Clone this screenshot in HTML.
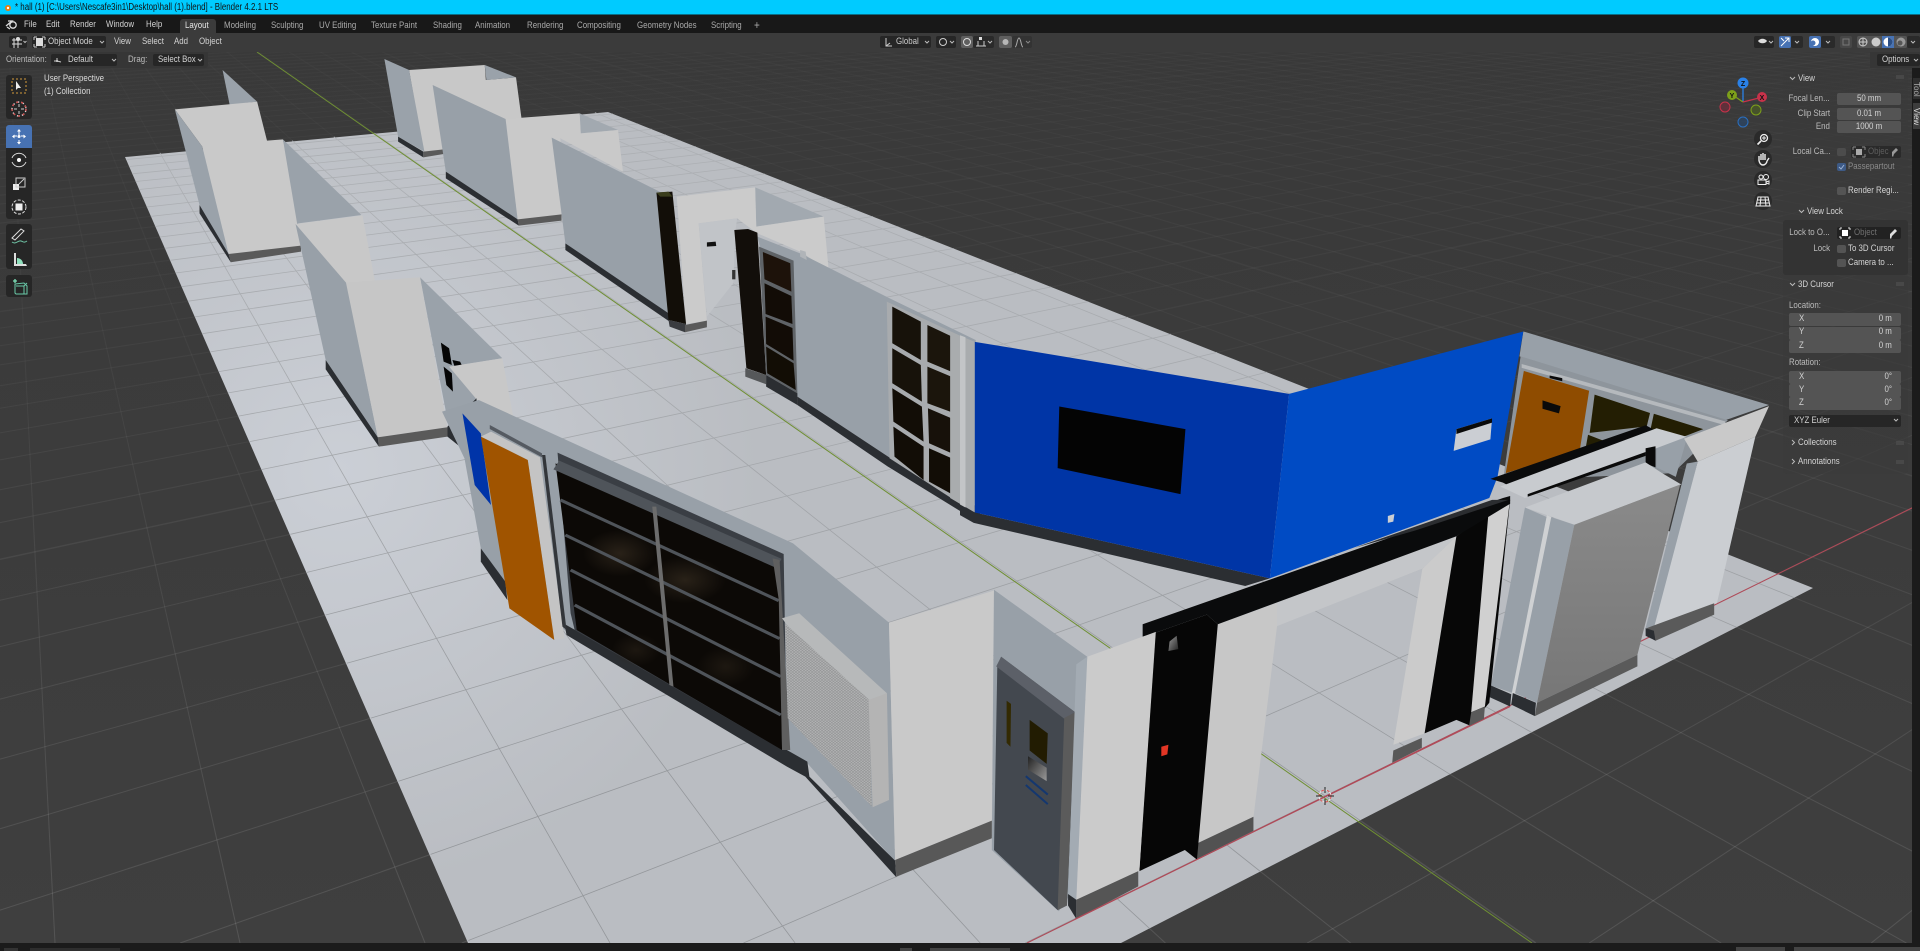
<!DOCTYPE html>
<html><head><meta charset="utf-8"><title>Blender</title>
<style>
html,body{margin:0;padding:0;background:#1d1d1d;overflow:hidden;width:1920px;height:951px}
#app{position:relative;width:1920px;height:951px;overflow:hidden;background:#3b3b3b;font-family:"Liberation Sans",sans-serif}
.b{position:absolute}
.t{position:absolute;white-space:nowrap;font:9.5px/10px "Liberation Sans",sans-serif;color:#d4d4d4;transform:scaleX(.83);transform-origin:0 50%}
.r{transform-origin:100% 50%}
.c{transform-origin:50% 50%;text-align:center}
.d{color:#aaa}
.f{position:absolute;background:#545454;border-radius:2px}
.k{position:absolute;background:#545454;border-radius:2px;width:9px;height:8px}
svg{position:absolute;left:0;top:0}
</style></head><body><div id="app">

<svg id="scene" width="1920" height="951" viewBox="0 0 1920 951" xmlns="http://www.w3.org/2000/svg">
<defs>
<linearGradient id="bgv" x1="0" y1="0" x2="0" y2="1"><stop offset="0" stop-color="#393939"/><stop offset="1" stop-color="#3f3f3f"/></linearGradient>
<linearGradient id="gl" gradientUnits="userSpaceOnUse" x1="0" y1="40" x2="0" y2="900"><stop offset="0" stop-color="#fff" stop-opacity=".02"/><stop offset=".35" stop-color="#fff" stop-opacity=".035"/><stop offset="1" stop-color="#fff" stop-opacity=".11"/></linearGradient>
<linearGradient id="ft" gradientUnits="userSpaceOnUse" x1="0" y1="110" x2="0" y2="800"><stop offset="0" stop-color="#aeb1b5"/><stop offset=".5" stop-color="#a4a7ab"/><stop offset="1" stop-color="#94979b"/></linearGradient>
<radialGradient id="fl" gradientUnits="userSpaceOnUse" cx="340" cy="470" r="420"><stop offset="0" stop-color="#cbcfd6"/><stop offset="1" stop-color="#babdc2"/></radialGradient>
<radialGradient id="spot"><stop offset="0" stop-color="#2c241a" stop-opacity=".9"/><stop offset="1" stop-color="#2c241a" stop-opacity="0"/></radialGradient>
<linearGradient id="gf" x1="0" y1="0" x2="0" y2="1"><stop offset="0" stop-color="#8a8a8a"/><stop offset="1" stop-color="#777"/></linearGradient>
<linearGradient id="sq" x1="0" y1="0" x2="1" y2="1"><stop offset="0" stop-color="#222"/><stop offset="1" stop-color="#9a9a9a"/></linearGradient>
<pattern id="vent" patternUnits="userSpaceOnUse" width="8" height="8"><rect width="8" height="8" fill="#b4b5b6"/><path d="M0 0L8 8M0 8L8 0" stroke="#8b8c8d" stroke-width="1.3"/></pattern>
<clipPath id="vp"><rect x="0" y="33" width="1920" height="910"/></clipPath>
</defs>
<rect x="0" y="33" width="1920" height="910" fill="url(#bgv)"/>
<g clip-path="url(#vp)">
<g id="bggrid" fill="none" stroke="url(#gl)" stroke-width="1"></g>
<polygon points="125,157 608,112 1813,588 1121,943 468,943" fill="url(#fl)"/>
<g id="flgrid" fill="none" stroke="url(#ft)" stroke-width=".8"></g>
<line x1="257" y1="52" x2="1532" y2="943" stroke="#6f8f33" stroke-width="1"/>
<line x1="1027" y1="943" x2="1920" y2="504" stroke="#b04a58" stroke-width="1.1"/>

<!-- back blocks : zoom 8 space -->
<g transform="translate(120 50) scale(.5485 .3333)">
<!-- block A -->
<polygon points="187,60 250,155 200,165" fill="#9aa2aa"/>
<polygon points="297,268 440,495 325,520 325,590" fill="#9aa2aa"/>
<polygon points="100,178 250,155 268,272 297,268 330,590 198,612 150,290" fill="#c9c9c9"/>
<polygon points="100,178 150,290 198,612 145,465" fill="#9aa2aa"/>
<polygon points="198,612 330,587 330,605 202,637" fill="#5a5a5a"/>
<polygon points="145,465 198,612 202,637 145,490" fill="#2b2e32"/>
<!-- block B -->
<polygon points="320,522 442,496 465,695 413,705" fill="#c8c8c8"/>
<polygon points="547,682 697,925 603,950 650,1045 600,1135" fill="#9aa2aa"/>
<polygon points="320,522 413,700 470,1162 375,930" fill="#98a0a8"/>
<polygon points="412,698 547,682 597,1132 470,1162" fill="#c6c6c6"/>
<polygon points="470,1162 597,1132 597,1160 472,1190" fill="#5a5a5a"/>
<polygon points="375,930 470,1162 472,1190 375,958" fill="#2b2e32"/>
<polygon points="585,878 600,895 605,945 590,935" fill="#050505"/>
<polygon points="590,950 605,970 607,1025 595,1005" fill="#050505"/>
<polygon points="606,930 620,935 624,948 610,950" fill="#050505"/>
<polygon points="600,950 697,925 717,1100 650,1048" fill="#c8c8c8"/>
<polygon points="597,1130 650,1045 650,1230 597,1160" fill="#2b2e32"/>
<!-- block D -->
<polygon points="527,60 665,45 667,90 722,82 732,205 760,500 587,305 553,305" fill="#c8c8c8"/>
<polygon points="665,45 722,82 668,90" fill="#9aa2aa"/>
<polygon points="482,27 527,60 555,305 507,260" fill="#9aa2aa"/>
<polygon points="507,260 553,305 553,322 507,275" fill="#2b2e32"/>
<polygon points="553,305 590,298 590,312 553,322" fill="#5a5a5a"/>
<!-- block E -->
<polygon points="838,190 908,240 840,250" fill="#a2a9b0"/>
<polygon points="703,207 838,190 840,250 908,240 917,365 803,265 805,497 725,510" fill="#c9c9c9"/>
<polygon points="570,105 703,207 725,510 594,365" fill="#98a0a8"/>
<polygon points="594,365 725,508 727,527 594,385" fill="#2b2e32"/>
<polygon points="725,508 805,493 805,512 727,527" fill="#5a5a5a"/>
<!-- block F -->
<polygon points="1158,412 1283,500 1160,530" fill="#a2a9b0"/>
<polygon points="1015,440 1158,412 1160,530 1283,500 1292,660 1240,605 1162,550 1125,505 1055,520 1070,812 1032,822" fill="#cbcbcb"/>
<polygon points="1055,520 1125,505 1122,545 1118,700 1070,800" fill="#c1c4c8"/>
<polygon points="1070,577 1086,575 1087,588 1070,590" fill="#111"/>
<polygon points="1116,660 1122,660 1122,688 1116,688" fill="#333"/>
<polygon points="787,263 990,430 1002,800 812,580" fill="#98a0a8"/>
<polygon points="812,580 1000,790 1002,815 812,600" fill="#2b2e32"/>
<polygon points="978,428 1007,425 1032,822 1000,810" fill="#120e08"/>
<polygon points="978,428 1000,425 1007,440 985,440" fill="#3a3d1c"/>
<polygon points="1000,810 1032,822 1030,847 1002,830" fill="#3a3c40"/>
<polygon points="1030,825 1070,812 1070,832 1030,847" fill="#5a5a5a"/>
<!-- wall H -->
<polygon points="1162,560 1240,610 1397,740 1560,870 1568,1370 1405,1225 1235,1040" fill="#98a0a8"/>
<polygon points="1240,600 1250,605 1252,630 1240,620" fill="#b0b4b8"/>
<polygon points="1120,540 1145,537 1162,548 1178,975 1142,955" fill="#120e0a"/>
<polygon points="1140,955 1178,975 1178,1003 1140,980" fill="#56585a"/>
<polygon points="1165,590 1228,632 1235,1030 1178,975" fill="#5f6367"/>
<polygon points="1172,606 1222,640 1224,725 1175,688" fill="#1d120a"/>
<polygon points="1175,700 1224,738 1226,822 1177,792" fill="#120c06"/>
<polygon points="1177,800 1226,834 1228,932 1178,882" fill="#120c06"/>
<polygon points="1178,890 1228,940 1232,1020 1180,970" fill="#120d05"/>
<polygon points="1235,1040 1405,1225 1568,1375 1568,1420 1400,1250 1235,1065" fill="#2b2e32"/>
<polygon points="1178,975 1235,1030 1235,1065 1178,1010" fill="#2b2e32"/>
<!-- window I -->
<polygon points="1398,755 1535,860 1535,1365 1403,1225" fill="#a8abae"/>
<polygon points="1408,770 1460,815 1460,930 1408,880" fill="#17120a"/>
<polygon points="1408,895 1460,945 1462,1055 1408,1000" fill="#17120a"/>
<polygon points="1408,1015 1462,1070 1465,1175 1410,1115" fill="#120d06"/>
<polygon points="1410,1130 1465,1190 1465,1290 1412,1220" fill="#120d06"/>
<polygon points="1472,825 1530,870 1530,975 1472,935" fill="#1b150c"/>
<polygon points="1472,950 1530,990 1530,1095 1472,1060" fill="#1b150c"/>
<polygon points="1473,1075 1530,1115 1530,1220 1475,1180" fill="#17110a"/>
<polygon points="1475,1195 1530,1235 1530,1345 1475,1295" fill="#120d06"/>
</g>

<!-- back part : zoom 7 space -->
<g transform="translate(960 320) scale(.5485 .3827)">
<polygon points="-18,30 27,57 27,503 -18,465" fill="#a9acae"/>
<polygon points="0,485 27,503 565,675 520,695 25,530 0,510" fill="#2b2e32"/>
<polygon points="0,40 10,45 10,490 0,482" fill="#c3c5c7"/>
<polygon points="1027,30 1475,222 1395,262 1020,95" fill="#98a0a8"/>
<polygon points="1022,95 1400,262 1300,400 990,420" fill="#8e959c"/>
<polygon points="1024,115 1395,265 1395,275 1024,125" fill="#b5b9bd"/>
<polygon points="1028,133 1147,185 1130,340 995,400" fill="#8f4c00"/>
<polygon points="1062,210 1095,225 1092,244 1062,232" fill="#0a0a0a"/>
<polygon points="1075,145 1098,152 1098,160 1075,152" fill="#0a0a0a"/>
<polygon points="1157,195 1258,243 1252,278 1148,295" fill="#231e03"/>
<polygon points="1265,245 1355,285 1310,310 1258,292" fill="#231e03"/>
<polygon points="1145,300 1185,322 1140,340" fill="#231e03"/>
<polygon points="27,57 600,193 565,675 27,503" fill="#0035a6"/>
<polygon points="600,193 1027,30 980,410 965,465 565,675" fill="#004bc4"/>
<polygon points="181,226 411,285 402,455 178,387" fill="#040404"/>
<polygon points="905,285 970,257 967,312 900,342" fill="#cbced3"/>
<polygon points="905,285 970,257 970,268 905,298" fill="#0a0a0a"/>
<polygon points="780,512 792,507 790,527 780,530" fill="#cbced3"/>
<!-- beam at rear -->
<polygon points="967,415 1250,275 1270,290 1268,330 1035,460 990,425" fill="#0a0b0c"/>
</g>

<!-- front-left wall : zoom 6 space -->
<g transform="translate(440 400) scale(.40816 .3333)">
<polygon points="95,0 865,430 1100,668 1115,1385 900,1090 305,690 160,570 100,445 60,175 5,35" fill="#98a0a8"/>
<polygon points="55,40 100,100 125,315 85,255" fill="#0034a8"/>
<polygon points="100,445 160,545 165,600 100,485" fill="#2b2e32"/>
<polygon points="305,672 900,1085 905,1130 1115,1382 1118,1432 895,1130 850,1100 310,705" fill="#2b2e32"/>
<polygon points="122,75 250,160 250,172 122,87" fill="#555a61"/>
<polygon points="125,95 245,172 305,715 280,720 215,180 100,110" fill="#c4c4c4"/>
<polygon points="100,110 215,180 280,720 170,625" fill="#a05400"/>
<polygon points="250,165 258,165 310,690 300,680" fill="#33363a"/>
<polygon points="288,158 842,462 850,1050 838,1050 330,690 320,640" fill="#3a3e44"/>
<polygon points="283,190 830,490 838,1050 335,690" fill="#0c0906"/>
<ellipse cx="600" cy="540" rx="100" ry="70" fill="url(#spot)"/>
<ellipse cx="440" cy="460" rx="90" ry="70" fill="url(#spot)"/>
<ellipse cx="700" cy="800" rx="70" ry="60" fill="url(#spot)" opacity=".6"/>
<ellipse cx="480" cy="750" rx="60" ry="50" fill="url(#spot)" opacity=".6"/>
<g stroke="#4f545a" stroke-width="9" fill="none">
<line x1="285" y1="195" x2="830" y2="490" stroke-width="30"/>
<line x1="295" y1="300" x2="830" y2="602"/>
<line x1="307" y1="405" x2="832" y2="716"/>
<line x1="320" y1="510" x2="835" y2="830"/>
<line x1="330" y1="615" x2="835" y2="945"/>
</g>
<polygon points="520,320 530,320 572,860 562,855" fill="#6c6c6c"/>
<polygon points="815,475 832,480 858,1050 838,1050 830,600" fill="#5f5f5f"/>
<!-- vent -->
<polygon points="838,655 880,640 1095,880 1050,905 850,675" fill="#b7b9ba"/>
<polygon points="845,670 1052,900 1058,1220 852,955" fill="url(#vent)"/>
<polygon points="1050,900 1095,880 1100,1200 1060,1222" fill="#b4b4b4"/>
<!-- pillar -->
<polygon points="1100,668 1357,572 1352,1262 1115,1380" fill="#c9c9c9"/>
<polygon points="1115,1380 1352,1262 1352,1315 1118,1430" fill="#585858"/>
</g>

<!-- front part : zoom 7 space -->
<g transform="translate(960 320) scale(.5485 .3827)">
<polygon points="62,705 232,880 197,1510 180,1545 58,1385" fill="#98a0a8"/>
<polygon points="75,880 210,1025 195,1530 178,1542 62,1385 68,905" fill="#43484f"/>
<polygon points="75,880 210,1025 190,1042 66,905" fill="#5c6068"/>
<polygon points="190,1040 210,1025 195,1530 178,1542" fill="#5b5b5b"/>
<polygon points="85,995 93,1003 92,1115 85,1105" fill="#332a02"/>
<polygon points="127,1045 160,1080 158,1160 127,1125" fill="#221c02"/>
<polygon points="124,1140 158,1170 158,1205 124,1175" fill="url(#sq)"/>
<line x1="120" y1="1192" x2="160" y2="1240" stroke="#14376f" stroke-width="2" vector-effect="non-scaling-stroke"/>
<line x1="120" y1="1215" x2="160" y2="1265" stroke="#14376f" stroke-width="2" vector-effect="non-scaling-stroke"/>
<!-- right group -->
<polygon points="1270,300 1325,310 1305,410 1270,385" fill="#98a0a8"/>
<polygon points="1445,270 1453,265 1448,300 1442,305" fill="#9aa2a9"/>
<polygon points="1320,310 1475,225 1450,305 1345,370" fill="#c9c9c9"/>
<polygon points="1325,375 1345,370 1270,805 1250,805" fill="#98a0a8"/>
<polygon points="1345,370 1450,305 1380,740 1265,805" fill="#cbced2"/>
<polygon points="1252,805 1375,740 1375,770 1268,838" fill="#5a5a5a"/>
<polygon points="1250,805 1265,812 1268,838 1250,825" fill="#2b2e32"/>
<polygon points="985,435 1270,283 1325,305 1030,465" fill="#c8cbcf"/>
<polygon points="1035,455 1250,345 1250,355 1035,462" fill="#0a0a0a"/>
<polygon points="1250,335 1268,330 1268,385 1250,375" fill="#0a0a0a"/>
<polygon points="1030,490 1250,372 1280,400 1315,430 1120,535 1075,512" fill="#c6c9cd"/>
<polygon points="1030,490 1070,515 1008,975 968,955" fill="#98a0a8"/>
<polygon points="1070,510 1078,515 1015,975 1006,975" fill="#cfd1d3"/>
<polygon points="1078,515 1120,535 1052,1000 1012,975" fill="#98a0a8"/>
<polygon points="1120,535 1313,430 1235,875 1052,1000" fill="url(#gf)"/>
<polygon points="1052,1000 1235,875 1235,905 1048,1035" fill="#5a5a5a"/>
<polygon points="968,955 1005,978 1003,1010 965,985" fill="#2b2e32"/>
<polygon points="1008,975 1050,1000 1048,1035 1005,1005" fill="#2b2e32"/>
<!-- opening walls -->
<polygon points="470,795 905,565 843,650 578,800" fill="#c4c6c9"/>
<polygon points="843,650 905,565 847,1080 790,1110" fill="#cbcbcb"/>
<polygon points="790,1125 842,1092 842,1118 788,1157" fill="#585858"/>
<polygon points="470,795 578,740 578,800 535,1300 432,1368" fill="#c7c7c7"/>
<polygon points="432,1368 535,1298 535,1335 432,1408" fill="#525252"/>
<!-- black columns + beam -->
<polygon points="905,565 1003,470 965,1000 930,1060 905,1045 847,1080" fill="#070707"/>
<polygon points="965,480 1003,465 957,1010 932,1025" fill="#d0d0d0"/>
<polygon points="932,1025 957,1010 955,1045 928,1062" fill="#5a5a5a"/>
<polygon points="355,818 450,770 470,795 432,1410 410,1385 327,1440" fill="#060606"/>
<polygon points="333,795 990,465 1003,460 1003,480 905,565 470,795 450,770 355,818 333,828" fill="#0a0b0c"/>
<polygon points="720,595 970,470 1000,470 830,550" fill="#2b2d30"/>
<polygon points="367,1115 380,1110 378,1135 367,1140" fill="#e23524"/>
<polygon points="380,830 398,825 396,850 383,865" fill="url(#sq)" transform="rotate(180 389 845)"/>
<polygon points="232,880 357,815 327,1440 212,1515" fill="#cbcbcb"/>
<polygon points="212,900 232,880 212,1515 197,1505" fill="#a3abb3"/>
<polygon points="212,1515 325,1440 325,1480 212,1565" fill="#555"/>
<polygon points="197,1500 212,1515 212,1565 197,1530" fill="#2b2e32"/>
<line x1="210" y1="1565" x2="1003" y2="1010" stroke="#b04a58" stroke-width="1" vector-effect="non-scaling-stroke"/>
</g>
<g fill="none" transform="translate(1325 796)">
<circle r="6" stroke="#e05050" stroke-width="1" stroke-dasharray="3 3"/>
<circle r="6" stroke="#eee" stroke-width="1" stroke-dasharray="3 3" stroke-dashoffset="3"/>
<path d="M0-9V-3M0 3V9M-9 0H-3M3 0H9" stroke="#222" stroke-width="1"/>
</g>
</g>
</svg>

<!-- chrome -->
<div class="b" style="left:0;top:0;width:1920px;height:15px;background:#00cbff"></div>
<div class="b" style="left:0;top:14px;width:1920px;height:1px;background:#0a6d85"></div>
<div class="b" style="left:0;top:15px;width:1920px;height:18px;background:#181818"></div>
<div class="b" style="left:0;top:33px;width:1920px;height:19px;background:#3b3b3b"></div>
<div class="b" style="left:0;top:943px;width:1920px;height:8px;background:#1b1b1b"></div>
<div class="b" style="left:4px;top:948px;width:14px;height:3px;background:#333"></div>
<div class="b" style="left:30px;top:948px;width:90px;height:3px;background:#2e2e2e"></div>
<div class="b" style="left:900px;top:948px;width:12px;height:3px;background:#444"></div>
<div class="b" style="left:930px;top:948px;width:80px;height:3px;background:#444"></div>
<div class="b" style="left:1736px;top:947px;width:49px;height:4px;background:#444"></div>
<div class="b" style="left:1794px;top:947px;width:126px;height:4px;background:#444"></div>
<div class="b" style="left:180px;top:19px;width:36px;height:14px;background:#3b3b3b;border-radius:3px 3px 0 0"></div>

<div class="t" style="left:15px;top:3px;color:#111;font-size:9.8px;transform:scaleX(.81)">* hall (1) [C:\Users\Nescafe3in1\Desktop\hall (1).blend] - Blender 4.2.1 LTS</div>

<div class="t" style="left:24px;top:20px">File</div>
<div class="t" style="left:46px;top:20px">Edit</div>
<div class="t" style="left:70px;top:20px">Render</div>
<div class="t" style="left:106px;top:20px">Window</div>
<div class="t" style="left:146px;top:20px">Help</div>
<div class="t" style="left:185px;top:21px;color:#e6e6e6">Layout</div>
<div class="t d" style="left:224px;top:21px">Modeling</div>
<div class="t d" style="left:271px;top:21px">Sculpting</div>
<div class="t d" style="left:319px;top:21px">UV Editing</div>
<div class="t d" style="left:371px;top:21px">Texture Paint</div>
<div class="t d" style="left:433px;top:21px">Shading</div>
<div class="t d" style="left:475px;top:21px">Animation</div>
<div class="t d" style="left:527px;top:21px">Rendering</div>
<div class="t d" style="left:577px;top:21px">Compositing</div>
<div class="t d" style="left:637px;top:21px">Geometry Nodes</div>
<div class="t d" style="left:711px;top:21px">Scripting</div>
<div class="t d" style="left:754px;top:20px;font-size:12px">+</div>

<!-- header widgets -->
<div class="f" style="left:9px;top:36px;width:18px;height:12px;background:#262626"></div>
<div class="f" style="left:32px;top:36px;width:74px;height:12px;background:#262626"></div>
<div class="t" style="left:48px;top:37px">Object Mode</div>
<div class="t" style="left:114px;top:37px">View</div>
<div class="t" style="left:142px;top:37px">Select</div>
<div class="t" style="left:174px;top:37px">Add</div>
<div class="t" style="left:199px;top:37px">Object</div>

<div class="b" style="left:0;top:52px;width:208px;height:16px;background:#363636;border-radius:0 0 3px 0"></div>
<div class="t" style="left:6px;top:55px;color:#bbb">Orientation:</div>
<div class="f" style="left:51px;top:54px;width:66px;height:12px;background:#262626"></div>
<div class="t" style="left:68px;top:55px">Default</div>
<div class="t" style="left:128px;top:55px;color:#bbb">Drag:</div>
<div class="f" style="left:153px;top:54px;width:51px;height:12px;background:#262626"></div>
<div class="t" style="left:158px;top:55px">Select Box</div>

<div class="f" style="left:880px;top:36px;width:51px;height:12px;background:#262626"></div>
<div class="t" style="left:896px;top:37px;color:#ccc">Global</div>
<div class="f" style="left:936px;top:36px;width:20px;height:12px;background:#262626"></div>
<div class="f" style="left:961px;top:36px;width:12px;height:12px;background:#5f5f5f"></div>
<div class="f" style="left:973px;top:36px;width:21px;height:12px;background:#2a2a2a"></div>
<div class="f" style="left:999px;top:36px;width:13px;height:12px;background:#5f5f5f"></div>
<div class="f" style="left:1012px;top:36px;width:20px;height:12px;background:#333"></div>
<div class="f" style="left:1754px;top:36px;width:20px;height:12px;background:#262626"></div>
<div class="f" style="left:1779px;top:36px;width:12px;height:12px;background:#4772b3"></div>
<div class="f" style="left:1791px;top:36px;width:12px;height:12px;background:#2a2a2a"></div>
<div class="f" style="left:1809px;top:36px;width:12px;height:12px;background:#4772b3"></div>
<div class="f" style="left:1821px;top:36px;width:14px;height:12px;background:#2a2a2a"></div>
<div class="f" style="left:1840px;top:36px;width:12px;height:12px;background:#474747"></div>
<div class="f" style="left:1857px;top:36px;width:50px;height:12px;background:#545454"></div>
<div class="f" style="left:1882px;top:36px;width:12px;height:12px;background:#4772b3;border-radius:0"></div>
<div class="f" style="left:1907px;top:36px;width:13px;height:12px;background:#2a2a2a"></div>
<div class="b" style="left:1870px;top:52px;width:50px;height:16px;background:#363636"></div>
<div class="f" style="left:1877px;top:54px;width:43px;height:12px;background:#262626"></div>
<div class="t" style="left:1882px;top:55px">Options</div>

<!-- side tabs -->
<div class="b" style="left:1912px;top:68px;width:8px;height:875px;background:#1b1b1b"></div>
<div class="b" style="left:1913px;top:78px;width:7px;height:21px;background:#2e2e2e"></div>
<div class="b" style="left:1913px;top:103px;width:7px;height:26px;background:#3d3d3d"></div>
<div class="t" style="left:1911px;top:82px;font-size:8px;color:#aaa;transform:rotate(90deg);transform-origin:5px 5px">Tool</div>
<div class="t" style="left:1911px;top:108px;font-size:8px;color:#ddd;transform:rotate(90deg);transform-origin:5px 5px">View</div>

<!-- N-panel -->
<div class="b" style="left:1783px;top:70px;width:125px;height:404px;background:rgba(58,58,58,.55);border-radius:4px"></div>
<div class="b" style="left:1783px;top:220px;width:125px;height:55px;background:#333;border-radius:3px"></div>
<div class="t" style="left:1798px;top:74px">View</div>
<div class="t r" style="right:90px;top:94px;color:#bbb">Focal Len...</div>
<div class="f" style="left:1837px;top:93px;width:64px;height:12px"></div><div class="t c" style="left:1837px;top:94px;width:64px">50 mm</div>
<div class="t r" style="right:90px;top:109px;color:#bbb">Clip Start</div>
<div class="f" style="left:1837px;top:108px;width:64px;height:12px"></div><div class="t c" style="left:1837px;top:109px;width:64px">0.01 m</div>
<div class="t r" style="right:90px;top:122px;color:#bbb">End</div>
<div class="f" style="left:1837px;top:121px;width:64px;height:12px"></div><div class="t c" style="left:1837px;top:122px;width:64px">1000 m</div>
<div class="t r" style="right:90px;top:147px;color:#bbb">Local Ca...</div>
<div class="k" style="left:1837px;top:148px;background:#4c4c4c"></div>
<div class="f" style="left:1851px;top:146px;width:50px;height:12px;background:#2a2a2a"></div>
<div class="t" style="left:1868px;top:147px;color:#5e5e5e">Objec</div>
<div class="k" style="left:1837px;top:163px;background:#3d5a86"></div>
<div class="t" style="left:1848px;top:162px;color:#8b8b8b">Passepartout</div>
<div class="k" style="left:1837px;top:187px"></div>
<div class="t" style="left:1848px;top:186px">Render Regi...</div>
<div class="t" style="left:1807px;top:207px">View Lock</div>
<div class="t r" style="right:90px;top:228px;color:#bbb">Lock to O...</div>
<div class="f" style="left:1837px;top:227px;width:64px;height:12px;background:#222"></div>
<div class="t" style="left:1854px;top:228px;color:#707070">Object</div>
<div class="t r" style="right:90px;top:244px;color:#bbb">Lock</div>
<div class="k" style="left:1837px;top:245px"></div>
<div class="t" style="left:1848px;top:244px">To 3D Cursor</div>
<div class="k" style="left:1837px;top:259px"></div>
<div class="t" style="left:1848px;top:258px">Camera to ...</div>
<div class="t" style="left:1798px;top:280px">3D Cursor</div>
<div class="t" style="left:1789px;top:301px;color:#bbb">Location:</div>
<div class="f" style="left:1789px;top:313px;width:112px;height:13px"></div>
<div class="f" style="left:1789px;top:326.5px;width:112px;height:13px"></div>
<div class="f" style="left:1789px;top:340px;width:112px;height:13px"></div>
<div class="t" style="left:1799px;top:314px">X</div><div class="t r" style="right:28px;top:314px">0 m</div>
<div class="t" style="left:1799px;top:327px">Y</div><div class="t r" style="right:28px;top:327px">0 m</div>
<div class="t" style="left:1799px;top:341px">Z</div><div class="t r" style="right:28px;top:341px">0 m</div>
<div class="t" style="left:1789px;top:358px;color:#bbb">Rotation:</div>
<div class="f" style="left:1789px;top:371px;width:112px;height:12.5px"></div>
<div class="f" style="left:1789px;top:384px;width:112px;height:12.5px"></div>
<div class="f" style="left:1789px;top:397px;width:112px;height:13px"></div>
<div class="t" style="left:1799px;top:372px">X</div><div class="t r" style="right:28px;top:372px">0°</div>
<div class="t" style="left:1799px;top:385px">Y</div><div class="t r" style="right:28px;top:385px">0°</div>
<div class="t" style="left:1799px;top:398px">Z</div><div class="t r" style="right:28px;top:398px">0°</div>
<div class="f" style="left:1789px;top:415px;width:112px;height:12px;background:#262626"></div>
<div class="t" style="left:1794px;top:416px">XYZ Euler</div>
<div class="t" style="left:1798px;top:438px">Collections</div>
<div class="t" style="left:1798px;top:457px">Annotations</div>

<div class="t" style="left:44px;top:74px;color:#dcdcdc">User Perspective</div>
<div class="t" style="left:44px;top:87px;color:#dcdcdc">(1) Collection</div>

<!-- toolbar buttons -->
<div class="f" style="left:6px;top:75px;width:26px;height:44px;background:#262626;border-radius:3px"></div>
<div class="f" style="left:6px;top:125px;width:26px;height:23px;background:#4772b3;border-radius:3px 3px 0 0"></div>
<div class="f" style="left:6px;top:148px;width:26px;height:71px;background:#262626;border-radius:0 0 3px 3px"></div>
<div class="f" style="left:6px;top:224px;width:26px;height:45px;background:#262626;border-radius:3px"></div>
<div class="f" style="left:6px;top:275px;width:26px;height:22px;background:#262626;border-radius:3px"></div>

<!-- overlay icons -->
<svg width="1920" height="951" viewBox="0 0 1920 951" xmlns="http://www.w3.org/2000/svg" fill="none">
<!-- title + blender logos -->
<circle cx="8" cy="8" r="3" fill="#e87d0d"/><circle cx="8" cy="8" r="1.2" fill="#fff"/>
<g stroke="#ddd" stroke-width="1.3"><circle cx="13" cy="25" r="3.2"/><path d="M6 26L12 21H8M10 29L7 27"/></g>
<g stroke="#ddd" stroke-width="1"><path d="M12 40H22M12 44H22M14 38V48M18 38V48"/></g><circle cx="18" cy="39" r="2" fill="#ddd"/>
<path d="M23.5 41l1.5 1.5 1.5-1.5" stroke="#bbb"/>
<rect x="36" y="38" width="7" height="8" fill="#ddd"/><path d="M34 37h3M34 37v3M45 37h-3M45 37v3M34 47h3M34 47v-3M45 47h-3M45 47v-3" stroke="#ccc"/>
<path d="M100 41l2 2 2-2" stroke="#bbb"/>
<g stroke="#ccc"><path d="M57 61v-3M57 61h-3M57 61l4 1"/></g><circle cx="57" cy="61" r="1" fill="#ddd"/>
<path d="M112 59l2 2 2-2M198 59l2 2 2-2M1914 59l2 2 2-2" stroke="#bbb"/>
<!-- global -->
<path d="M886 38v8h6M886 46l4-3" stroke="#ccc"/><path d="M925 41l2 2 2-2M950 41l2 2 2-2" stroke="#bbb"/>
<circle cx="943" cy="42" r="3.5" stroke="#ccc"/><circle cx="967" cy="42" r="3.5" stroke="#ddd"/>
<path d="M976 46h10M978 46v-5M984 46v-5" stroke="#ccc"/><rect x="979" y="37" width="3" height="3" fill="#ddd"/><path d="M988 41l2 2 2-2" stroke="#bbb"/>
<circle cx="1005.500" cy="42" r="3" fill="#ddd" fill-opacity=".7"/><path d="M1015 47c2 0 2-9 4-9s2 9 4 9" stroke="#aaa"/><path d="M1026 41l2 2 2-2" stroke="#888"/>
<!-- right header icons -->
<path d="M1758 41c2-3 7-3 9 0-2 3-7 3-9 0z" fill="#ddd"/><path d="M1769 41l2 2 2-2M1795 41l2 2 2-2M1826 41l2 2 2-2M1911 41l2 2 2-2" stroke="#bbb"/>
<path d="M1781 46l8-8M1785 38h4v4M1781 38l3 3" stroke="#fff"/>
<circle cx="1815" cy="42" r="4" fill="#fff"/><circle cx="1813" cy="43" r="2.500" fill="#4772b3"/>
<rect x="1843" y="39" width="6" height="6" stroke="#777"/>
<circle cx="1863" cy="42" r="4" stroke="#ccc"/><path d="M1859 42h8M1863 38v8" stroke="#ccc"/>
<circle cx="1876" cy="42" r="4.500" fill="#ccc"/>
<circle cx="1888" cy="42" r="4.500" fill="#fff"/><path d="M1888 37.500a4.500 4.500 0 0 1 0 9z" fill="#2c4f85"/>
<circle cx="1901" cy="42" r="4.500" fill="#999"/><circle cx="1900" cy="43" r="2.500" fill="#555"/>
<!-- toolbar icons -->
<rect x="12" y="79" width="14" height="14" stroke="#d39a3c" stroke-dasharray="2 2"/><path d="M16 81v9l2-2 3 0z" fill="#eee"/>
<circle cx="19" cy="109" r="7" stroke="#ddd" stroke-width="1.4" stroke-dasharray="3 2"/><circle cx="19" cy="109" r="7" stroke="#c44" stroke-width="1.4" stroke-dasharray="2 3"/><path d="M19 104v3M19 111v3M14 109h3M21 109h3" stroke="#ccc"/>
<path d="M19 130v6M19 140v4M13 136h4M21 136h4" stroke="#fff"/><circle cx="19" cy="136.500" r="1.500" fill="#fff"/><path d="M19 129l-2 2.500h4zM19 144.500l-2-2.500h4zM12 136.500l2.500-2v4zM26 136.500l-2.500-2v4z" fill="#fff"/>
<circle cx="19" cy="160" r="2" fill="#fff"/><path d="M12 158a7.500 7.500 0 0 1 14 0M12 162a7.500 7.500 0 0 0 14 0" stroke="#ddd"/>
<rect x="13" y="184" width="6" height="6" fill="#eee"/><rect x="16" y="178" width="9" height="9" stroke="#ccc"/><path d="M19 184l5-5" stroke="#ccc"/>
<circle cx="19" cy="207" r="7" stroke="#ddd" stroke-dasharray="3 1.500"/><rect x="15.500" y="203.500" width="7" height="7" fill="#eee"/>
<path d="M12 238l9-9 3 2-9 9z" stroke="#ddd"/><path d="M12 242c4 3 6-2 9-1s3 2 6 0" stroke="#6fc3a5"/>
<path d="M14 253v13h13l-1-2H16v-11z" fill="#ddd"/><path d="M17 264v-6a6 6 0 0 1 6 6z" fill="#8fe0bd"/>
<path d="M13 281h4M15 279v4" stroke="#7de0b8" stroke-width="1.300"/><path d="M15 284l9-1 3 3v8H16l-1-1zM16 286h8v8M24 286l3-3" stroke="#69c9a8"/>
<!-- N-panel chevrons and icons -->
<g stroke="#bbb"><path d="M1790 77l2.500 2.500 2.500-2.500M1799 210l2.500 2.500 2.500-2.500M1790 283l2.500 2.500 2.500-2.500M1792 440l2.500 2.500-2.500 2.500M1792 459l2.500 2.500-2.500 2.500M1894 419l2 2 2-2"/>
<path d="M1896 76h8M1896 78h8M1896 283h8M1896 285h8M1896 442h8M1896 444h8M1896 461h8M1896 463h8" stroke="#555"/></g>
<path d="M1839 167l2 2 3-4" stroke="#9cb3d4"/>
<rect x="1856" y="149" width="6" height="6" fill="#aaa"/><path d="M1853 147h3M1853 147v3M1865 147h-3M1865 147v3M1853 157h3M1853 157v-3M1865 157h-3M1865 157v-3" stroke="#888"/>
<path d="M1892 156l1 1 1-3 4-4-2-2-4 4z" fill="#999"/>
<rect x="1842" y="230" width="6" height="6" fill="#fff"/><path d="M1840 228h2M1840 228v2M1850 228h-2M1850 228v2M1840 238h2M1840 238v-2M1850 238h-2M1850 238v-2" stroke="#ddd"/>
<path d="M1890 238l1 1 1-3 5-5-2-2-5 5z" fill="#ddd"/>
<!-- gizmo -->
<path d="M1743 102V88" stroke="#2a81e8" stroke-width="1.300"/><path d="M1743 102l-9-6" stroke="#7da01a" stroke-width="1.300"/><path d="M1743 102l16-4" stroke="#c8324a" stroke-width="1.300"/>
<circle cx="1743" cy="83" r="5.500" fill="#2a81e8"/><circle cx="1732" cy="95" r="5" fill="#7da01a"/><circle cx="1762" cy="97" r="5" fill="#c8324a"/>
<circle cx="1725" cy="107" r="5" fill="#7a2a3a" fill-opacity=".6" stroke="#c8324a"/><circle cx="1756" cy="110" r="5" fill="#4f6320" fill-opacity=".6" stroke="#7da01a"/><circle cx="1743" cy="122" r="5" fill="#26476f" fill-opacity=".6" stroke="#2a6fc0"/>
<g fill="#111" font-family="Liberation Sans,sans-serif" font-size="7" font-weight="bold" text-anchor="middle"><text x="1743" y="86">Z</text><text x="1732" y="98">Y</text><text x="1762" y="100">X</text></g>
<!-- nav -->
<circle cx="1763" cy="139" r="9" fill="#2a2a2a"/><circle cx="1763" cy="159" r="9" fill="#2a2a2a"/><circle cx="1763" cy="180" r="9" fill="#2a2a2a"/><circle cx="1763" cy="201" r="9" fill="#2a2a2a"/>
<circle cx="1764" cy="138" r="3.500" stroke="#eee" stroke-width="1.300"/><path d="M1761 141l-3.500 3.500" stroke="#eee" stroke-width="1.600"/><path d="M1762 138h4M1764 136v4" stroke="#eee"/>
<path d="M1759 161v-5M1761 160v-6M1763 160v-7M1765 160v-6M1767 161l2-3M1759 160c0 3 2 5 4 5s4-2 4-4" stroke="#eee" stroke-width="1.400"/>
<circle cx="1761" cy="177" r="2" stroke="#eee"/><circle cx="1766" cy="177" r="2.500" stroke="#eee"/><rect x="1758" y="180" width="8" height="4.500" stroke="#eee"/><path d="M1766 182l3-1v3l-3-1" stroke="#eee"/>
<path d="M1758 197h10l2 9h-14zM1761 197l-1 9M1765 197l1 9M1757 200h12M1756.500 203h13" stroke="#eee"/>
</svg>

<script>
(function(){
var O=[1325,796],VX=[3213,-130],VY=[0,-128],A=.0497,B=.0758,NS='http://www.w3.org/2000/svg';
function P(a,b){var d=1+a+b;return [(O[0]+a*VX[0]+b*VY[0])/d,(O[1]+a*VX[1]+b*VY[1])/d];}
function clip(p,q){
 var t0=0,t1=1,dx=q[0]-p[0],dy=q[1]-p[1],ps=[-dx,dx,-dy,dy],qs=[p[0],1920-p[0],p[1]-33,943-p[1]];
 for(var i=0;i<4;i++){
  if(ps[i]===0){if(qs[i]<0)return null;continue;}
  var r=qs[i]/ps[i];
  if(ps[i]<0){if(r>t1)return null;if(r>t0)t0=r;}else{if(r<t0)return null;if(r<t1)t1=r;}
 }
 return [[p[0]+t0*dx,p[1]+t0*dy],[p[0]+t1*dx,p[1]+t1*dy]];
}
function L(par,p,q,extra){var c=clip(p,q);if(!c)return;p=c[0];q=c[1];var l=document.createElementNS(NS,'line');l.setAttribute('x1',p[0].toFixed(1));l.setAttribute('y1',p[1].toFixed(1));l.setAttribute('x2',q[0].toFixed(1));l.setAttribute('y2',q[1].toFixed(1));if(extra)l.setAttribute('stroke-width',extra);par.appendChild(l);}
var bg=document.getElementById('bggrid'),fl=document.getElementById('flgrid'),i;
for(i=-60;i<=160;i++){var b=B*i,a0=.03-1-b;L(bg,P(a0,b),P(60,b),i%10==0?1.4:1);}
for(i=-100;i<=320;i++){var a=A*i,b0=.03-1-a;L(bg,P(a,b0),P(a,60),i%10==0?1.4:1);}
for(i=-5;i<=6;i++)L(fl,P(A*i,B*-.34),P(A*i,B*33.5));
for(i=0;i<=33;i++)L(fl,P(A*-5.76,B*i),P(A*6.35,B*i));
})();
</script>
</div></body></html>
